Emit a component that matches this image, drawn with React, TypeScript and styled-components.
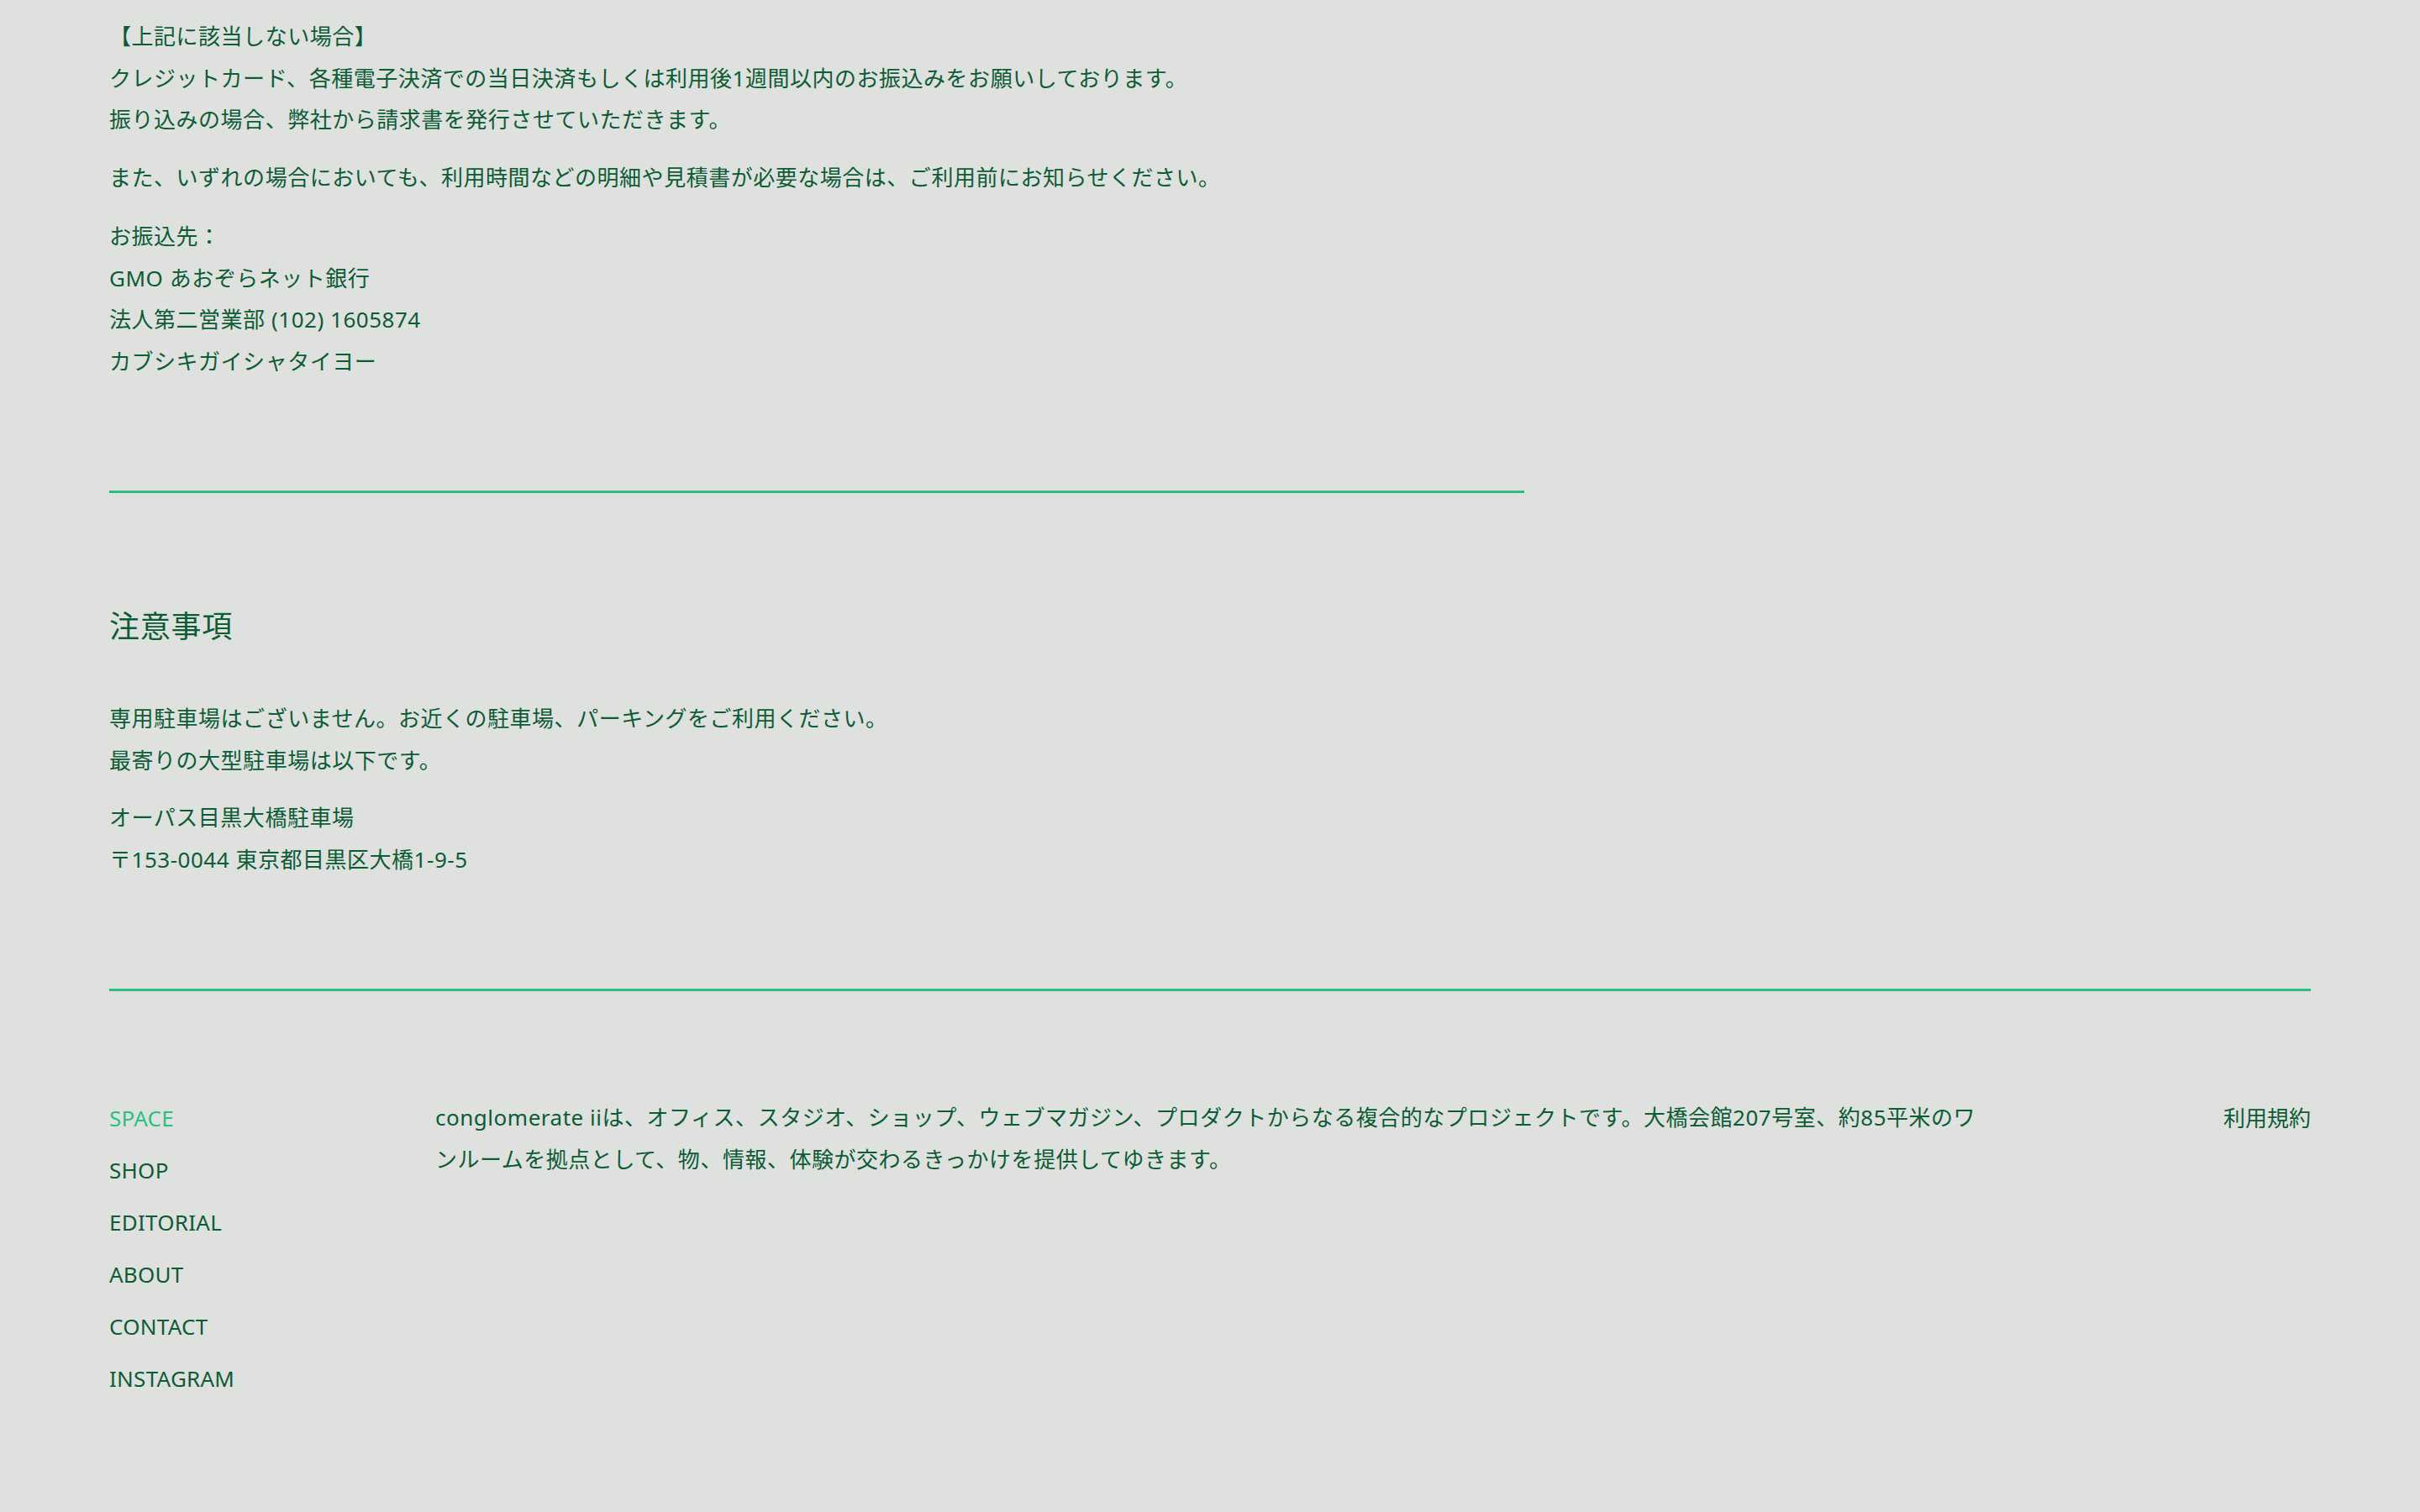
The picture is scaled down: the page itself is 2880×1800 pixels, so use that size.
import React from 'react';
import styled, { createGlobalStyle } from 'styled-components';

const GlobalStyle = createGlobalStyle`
  html, body {
    margin: 0;
    padding: 0;
    background: #dfe1df;
  }
  body {
    font-family: "Noto Sans", "Noto Sans CJK JP", sans-serif;
    color: #0c5c36;
    -webkit-font-smoothing: antialiased;
  }
`;

const Page = styled.div`
  min-height: 1800px;
  padding: 19px 130px 0;
  box-sizing: border-box;
`;

const Main = styled.main`
  width: 1684px;
`;

const Block = styled.div<{ $gap?: number }>`
  margin-bottom: ${p => p.$gap ?? 19}px;
`;

const Line = styled.p`
  margin: 0;
  font-size: 26px;
  line-height: 49.5px;
  letter-spacing: 0.02em;
`;

const Rule = styled.hr<{ $full?: boolean }>`
  border: 0;
  height: 3px;
  background: #2cc07e;
  margin: 0;
  width: ${p => (p.$full ? '100%' : '1684px')};
`;

const Section = styled.section<{ $top: number }>`
  padding-top: ${p => p.$top}px;
`;

const Heading = styled.h2`
  margin: 0 0 60px;
  font-size: 36px;
  font-weight: 400;
  line-height: 50px;
  letter-spacing: 0.02em;
`;

const Footer = styled.footer`
  display: grid;
  grid-template-columns: 388px 1840px 1fr;
  align-items: start;
  padding-top: 126px;
`;

const Nav = styled.nav`
  display: flex;
  flex-direction: column;
  gap: 12px;
`;

const NavLink = styled.a<{ $active?: boolean }>`
  font-size: 26px;
  line-height: 50px;
  color: ${p => (p.$active ? '#2cc07e' : '#0c5c36')};
  text-decoration: none;
  letter-spacing: 0.01em;
`;

const About = styled.p`
  margin: 0;
  font-size: 26px;
  line-height: 49.5px;
  letter-spacing: 0.02em;
`;

const Terms = styled.a`
  justify-self: end;
  font-size: 26px;
  line-height: 50px;
  color: #0c5c36;
  text-decoration: none;
`;

const navItems = ['SPACE', 'SHOP', 'EDITORIAL', 'ABOUT', 'CONTACT', 'INSTAGRAM'];

export default function App() {
  return (
    <>
      <GlobalStyle />
      <Page>
        <Main>
          <Block>
            <Line>【上記に該当しない場合】</Line>
            <Line>クレジットカード、各種電子決済での当日決済もしくは利用後1週間以内のお振込みをお願いしております。</Line>
            <Line>振り込みの場合、弊社から請求書を発行させていただきます。</Line>
          </Block>
          <Block $gap={21}>
            <Line>また、いずれの場合においても、利用時間などの明細や見積書が必要な場合は、ご利用前にお知らせください。</Line>
          </Block>
          <Block>
            <Line>お振込先：</Line>
            <Line>GMO あおぞらネット銀行</Line>
            <Line>法人第二営業部 (102) 1605874</Line>
            <Line>カブシキガイシャタイヨー</Line>
          </Block>
          <Section $top={110}>
            <Rule />
          </Section>
          <Section $top={134}>
            <Heading>注意事項</Heading>
            <Block>
              <Line>専用駐車場はございません。お近くの駐車場、パーキングをご利用ください。</Line>
              <Line>最寄りの大型駐車場は以下です。</Line>
            </Block>
            <Block>
              <Line>オーパス目黒大橋駐車場</Line>
              <Line>〒153-0044 東京都目黒区大橋1-9-5</Line>
            </Block>
          </Section>
        </Main>
        <Section $top={110}>
          <Rule $full />
        </Section>
        <Footer>
          <Nav>
            {navItems.map((item, i) => (
              <NavLink key={item} href="#" $active={i === 0}>
                {item}
              </NavLink>
            ))}
          </Nav>
          <About>
            conglomerate iiは、オフィス、スタジオ、ショップ、ウェブマガジン、プロダクトからなる複合的なプロジェクトです。大橋会館207号室、約85平米のワンルームを拠点として、物、情報、体験が交わるきっかけを提供してゆきます。
          </About>
          <Terms href="#">利用規約</Terms>
        </Footer>
      </Page>
    </>
  );
}
